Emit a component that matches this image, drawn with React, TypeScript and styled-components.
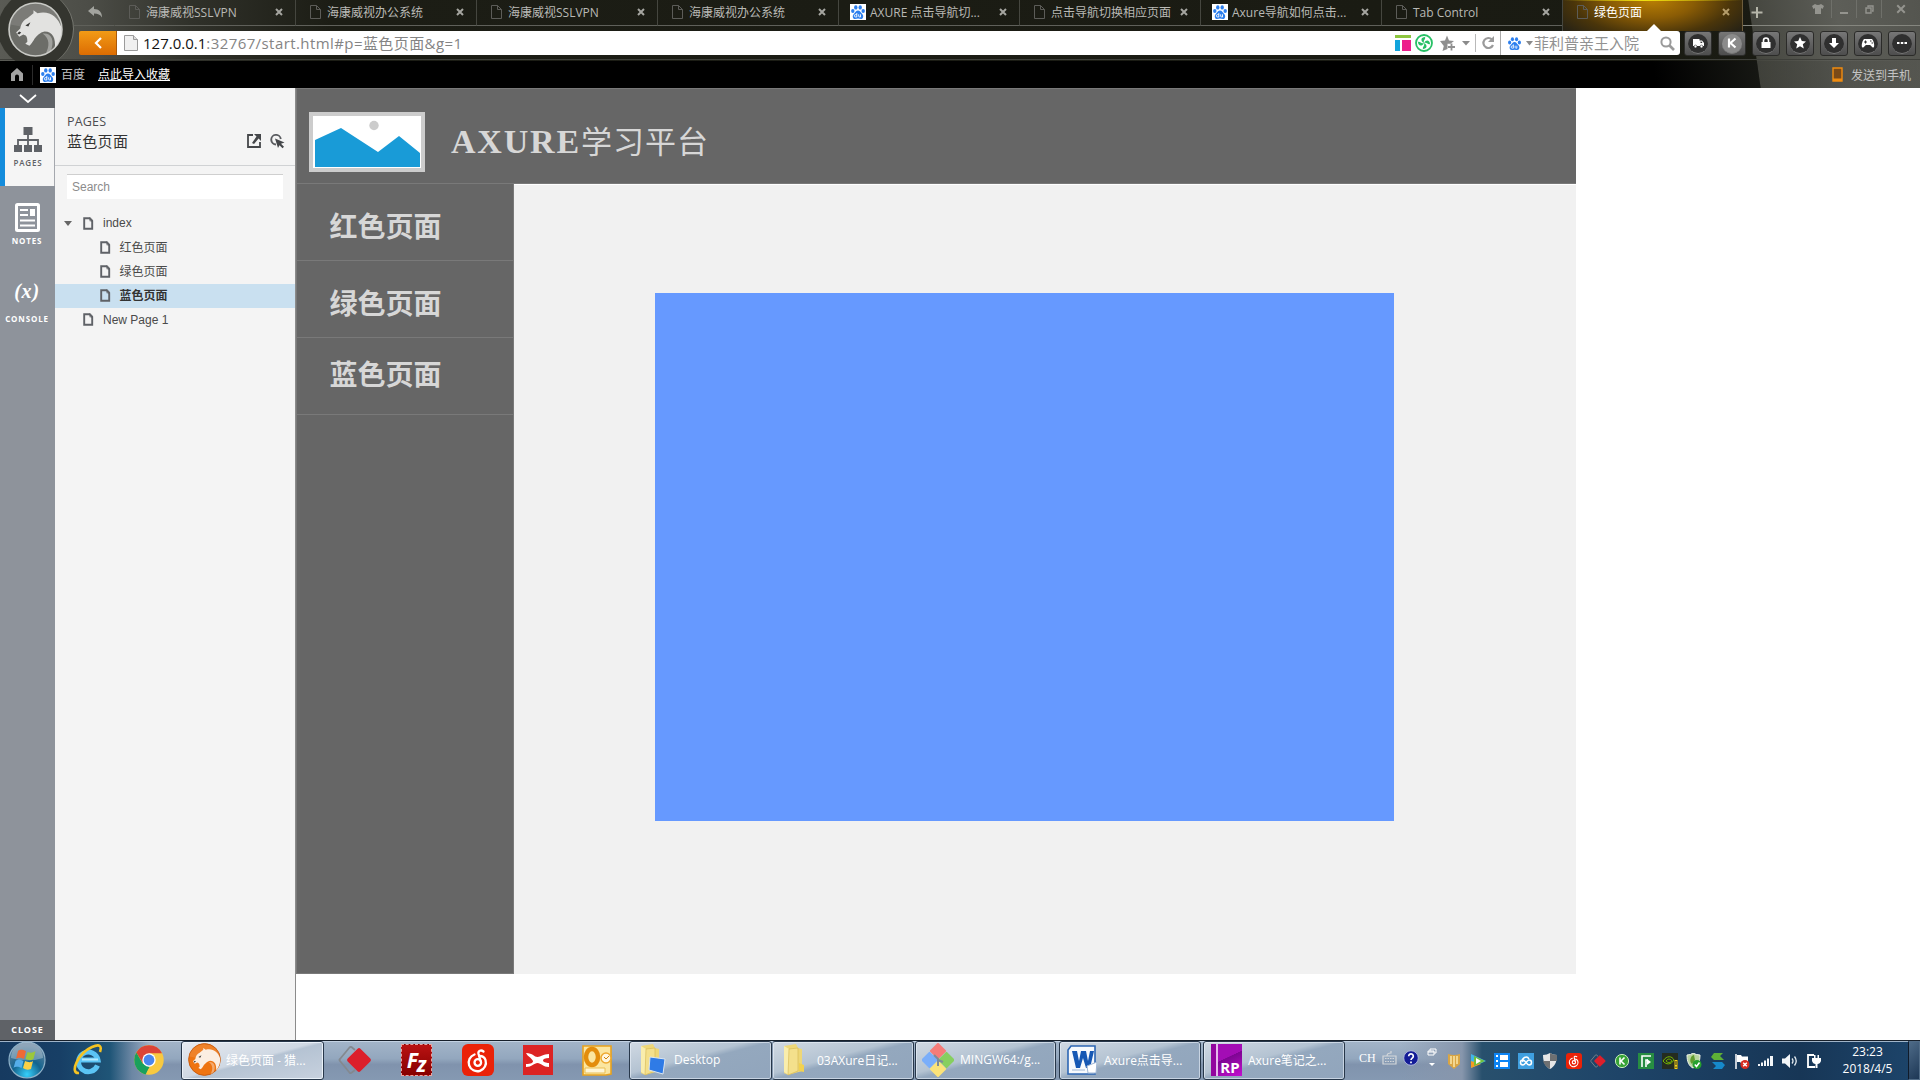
import React from "react";
import styled, { createGlobalStyle, css } from "styled-components";

const ui = `"Open Sans", "Noto Sans CJK SC", sans-serif`;
const arial = `"Liberation Sans", "Noto Sans CJK SC", sans-serif`;

const Global = createGlobalStyle`
  *, *::before, *::after { box-sizing: border-box; }
  body { margin: 0; background: #fff; overflow: hidden; font-family: ${ui}; }
  svg { display: block; flex: none; }
`;

const Desktop = styled.div`
  width: 1920px;
  height: 1080px;
  display: flex;
  flex-direction: column;
  overflow: hidden;
  background: #fff;
`;

/* ---------- browser chrome ---------- */

const Chrome = styled.header`
  position: relative;
  height: 88px;
  flex: none;
  display: flex;
  flex-direction: column;
  background: linear-gradient(82deg, transparent 0 1743px, #45463f 1744px, #5d5e58 1830px, #54554f 100%),
    linear-gradient(90deg, #5a5b55 0, #4c4d47 90px, #30312a 190px, #1c1d15 330px, #191a12 100%);
`;

const Brand = styled.div`
  position: absolute;
  left: -2px;
  top: -9px;
  width: 76px;
  height: 76px;
  border-radius: 50%;
  display: grid;
  place-items: center;
  background: #34352f;
  border-right: 1px solid #777871;
  clip-path: inset(9px 0 6px 2px);
`;

const TabRow = styled.div`
  height: 26px;
  display: flex;
  padding-left: 74px;
`;

const BackSlot = styled.div`
  width: 40px;
  padding: 6px 0 0 14px;
  border-bottom: 1px solid #5f605a;
`;

const Tab = styled.div<{ $active?: boolean }>`
  width: 181px;
  height: 26px;
  flex: none;
  display: flex;
  align-items: center;
  padding: 0 12px 1px 11px;
  border-left: 1px solid #45463f;
  border-bottom: 1px solid #5f605a;
  font-size: 12px;
  line-height: 22px;
  color: #b9b9b5;
  ${(p) =>
    p.$active &&
    css`
      color: #fff;
      height: 31px;
      padding-bottom: 7px;
      border-bottom: 0;
      border-right: 1px solid #6d5c3c;
      background: linear-gradient(90deg, transparent 0, #efe010 45%, transparent 100%) 0 0 / 100% 1px no-repeat,
        radial-gradient(ellipse 110px 48px at 50% 0, #b97f04 0, #8a5c05 38%, #4a350a 72%, transparent 100%), #282315;
    `}
`;

const Favicon = styled.span<{ $wide?: boolean }>`
  width: 20px;
  flex: none;
  display: flex;
  padding-left: ${(p) => (p.$wide ? 0 : 3)}px;
`;

const TabTitle = styled.span`
  flex: 1;
  white-space: nowrap;
  margin-top: 1px;
`;

const NewTab = styled.div`
  flex: 1;
  display: flex;
  align-items: flex-start;
  padding: 7px 0 0 8px;
  border-bottom: 1px solid #85867f;
`;

const WindowControls = styled.div`
  margin: -7px 0 0 auto;
  display: flex;
`;

const WindowButton = styled.div<{ $w: number }>`
  width: ${(p) => p.$w}px;
  height: 18px;
  display: grid;
  place-items: center;
  border-right: 1px solid #6f706a;
  &:last-child {
    border-right: 0;
  }
`;

const AddressRow = styled.div`
  height: 34px;
  display: flex;
  padding: 5px 4px 5px 79px;
  border-bottom: 1px solid #3e3f3a;
`;

const GoBack = styled.div`
  width: 38px;
  height: 24px;
  display: grid;
  place-items: center;
  border-radius: 2px 0 0 2px;
  background: linear-gradient(#f29b16, #dc6c02);
  border-right: 1px solid #a9590a;
`;

const UrlField = styled.div`
  width: 1384px;
  height: 24px;
  display: flex;
  align-items: center;
  padding-left: 7px;
  background: #fff;
  border-right: 1px solid #aaa;
`;

const UrlText = styled.span`
  margin-left: 5px;
  flex: 1;
  font-size: 15px;
  line-height: 24px;
  letter-spacing: 0.42px;
  color: #848484;
  b {
    font-weight: 400;
    letter-spacing: 0;
    color: #111;
  }
`;

const UrlTools = styled.div`
  display: flex;
  align-items: center;
  padding-right: 2px;
`;

const SearchField = styled.div`
  width: 179px;
  height: 24px;
  display: flex;
  align-items: center;
  padding: 0 5px 0 6px;
  border-radius: 0 3px 3px 0;
  background: #fff;
  color: #929292;
  font-size: 15px;
  line-height: 24px;
  span {
    flex: 1;
    margin-left: 1px;
  }
`;

const ToolButtons = styled.div`
  display: flex;
  gap: 6px;
  margin-left: 4px;
`;

const ToolButton = styled.div`
  width: 28px;
  height: 25px;
  display: grid;
  place-items: center;
  border: 1px solid #2b2b29;
  border-radius: 3px;
  background: linear-gradient(#777, #4d4d4d);
`;

const ToolDisc = styled.div<{ $light?: boolean }>`
  width: 20px;
  height: 20px;
  display: grid;
  place-items: center;
  border-radius: 50%;
  background: ${(p) => (p.$light ? "#8b8b8b" : "#2f2f2f")};
  border-bottom: 1px solid #777;
`;

const BookmarkRow = styled.div`
  flex: 1;
  display: flex;
  align-items: center;
  margin-top: 1px;
  padding: 0 9px 0 11px;
  font-size: 12px;
  color: #c4c4c4;
  background: linear-gradient(
    82deg,
    #000 0 1640px,
    #161713 1743px,
    rgba(60, 61, 55, 0.6) 1744px,
    rgba(85, 86, 80, 0.5) 100%
  );
`;

const BookmarkDivider = styled.div`
  width: 1px;
  height: 20px;
  margin: 0 7px 0 9px;
  background: #2c2c2c;
`;

const Bookmark = styled.span<{ $link?: boolean }>`
  margin-left: ${(p) => (p.$link ? 13 : 5)}px;
  line-height: 20px;
  ${(p) => p.$link && "color: #fff; text-decoration: underline;"}
`;

const SendToPhone = styled.div`
  margin-left: auto;
  display: flex;
  gap: 8px;
  align-items: center;
`;

/* ---------- prototype player ---------- */

const Player = styled.main`
  height: 952px;
  display: flex;
`;

const Rail = styled.nav`
  width: 55px;
  display: flex;
  flex-direction: column;
  background: #8e939b;
`;

const RailCap = styled.div<{ $bottom?: boolean }>`
  height: 20px;
  display: grid;
  place-items: center;
  background: #5f6267;
  color: #fff;
  font: 700 9px/20px "Open Sans", sans-serif;
  letter-spacing: 0.9px;
  margin-top: ${(p) => (p.$bottom ? "auto" : 0)};
`;

const RailItem = styled.div<{ $active?: boolean }>`
  height: 78px;
  display: flex;
  flex-direction: column;
  align-items: center;
  padding: 17px 1px 0 0;
  font: ${(p) => (p.$active ? 600 : 700)} 8px/12px "Open Sans", sans-serif;
  letter-spacing: 0.85px;
  color: ${(p) => (p.$active ? "#5f6267" : "#fff")};
  ${(p) =>
    p.$active &&
    css`
      background: #f5f5f5;
      border-left: 5px solid #148cdc;
      border-right: 1px solid #a5a8ae;
      padding-right: 3px;
    `}
`;

const RailGlyph = styled.div`
  height: 29px;
  margin-bottom: 3px;
  display: grid;
  place-items: center;
`;

const ConsoleGlyph = styled(RailGlyph)`
  font: italic 700 20px/21px "Liberation Serif", serif;
  align-items: start;
  letter-spacing: 0.8px;
`;

const Panel = styled.aside`
  width: 240px;
  background: #f4f4f4;
`;

const PanelHead = styled.div`
  height: 78px;
  padding: 25px 10px 0 12px;
  border-bottom: 1px solid #d0d2d4;
`;

const PanelLabel = styled.div`
  font: 12.5px/17px "Open Sans", sans-serif;
  letter-spacing: 0.2px;
  color: #4c4d50;
`;

const PanelTitle = styled.div`
  display: flex;
  align-items: center;
  gap: 9px;
  height: 22px;
  font: 15px/22px ${arial};
  letter-spacing: 0.3px;
  color: #333;
  span {
    flex: 1;
    padding-top: 1px;
  }
`;

const SearchBox = styled.div`
  margin: 8px 12px 12px;
  height: 25px;
  padding-left: 5px;
  border-top: 1px solid #cfcfcf;
  background: #fff;
  font: 12px/24px ${arial};
  color: #8c8c8c;
`;

const TreeRow = styled.div<{ $level: number; $selected?: boolean }>`
  height: 24.2px;
  display: flex;
  align-items: center;
  padding-left: ${(p) => 9 + p.$level * 16.5}px;
  font: ${(p) => (p.$selected ? 700 : 400)} 12px/24px ${arial};
  color: ${(p) => (p.$selected ? "#333" : "#4a4a4a")};
  background: ${(p) => (p.$selected ? "#c9e0f0" : "transparent")};
`;

const Arrow = styled.span<{ $open?: boolean }>`
  width: 19px;
  &::before {
    content: "";
    display: block;
    width: 0;
    border: 4.5px solid transparent;
    border-top: 5px solid ${(p) => (p.$open ? "#666" : "transparent")};
    border-bottom: 0;
  }
`;

const TreeText = styled.span<{ $child?: boolean }>`
  margin-left: 9px;
  padding-top: ${(p) => (p.$child ? 1 : 0)}px;
`;

const Stage = styled.section`
  flex: 1;
  border-left: 1px solid #8b8b8b;
  background: #fff;
`;

const Prototype = styled.div`
  width: 1280px;
  height: 886px;
  display: flex;
  flex-direction: column;
`;

const Banner = styled.div`
  height: 96px;
  display: flex;
  align-items: center;
  padding-left: 13px;
  background: #666;
  border-top: 1px solid #797979;
  border-bottom: 1px solid #797979;
  border-left: 1px solid #797979;
`;

const Picture = styled.div`
  width: 116px;
  height: 60px;
  margin: 12px 26px 0 -1px;
  border: 4px solid #ccc;
  background: #fff;
`;

const BannerTitle = styled.h1`
  margin: 10px 0 0;
  display: flex;
  align-items: baseline;
  color: #d7d7d7;
  font: 400 31px/44px "Noto Sans CJK SC", sans-serif;
  letter-spacing: 1px;
  span {
    font: 700 34px/44px "Liberation Serif", serif;
    letter-spacing: 1.8px;
  }
`;

const Columns = styled.div`
  flex: 1;
  display: flex;
`;

const Menu = styled.div`
  width: 218px;
  background: #666;
  border: 1px solid #797979;
  border-top: 0;
`;

const MenuItem = styled.div<{ $top: number }>`
  height: 77px;
  padding: ${(p) => p.$top}px 0 0 32.5px;
  border-bottom: 1px solid #797979;
  font: 700 28px/40px "Noto Sans CJK SC", sans-serif;
  color: #d7d7d7;
`;

const Frame = styled.div`
  flex: 1;
  padding: 108px 182px 153px 141px;
  background: #f1f1f1;
  border-top: 1px solid #fff;
`;

const BluePage = styled.div`
  height: 528px;
  background: #69f;
`;

/* ---------- taskbar ---------- */

const Taskbar = styled.footer`
  height: 40px;
  display: flex;
  border-top: 1px solid #17202b;
  box-shadow: inset 0 1px 0 rgba(205, 220, 235, 0.75);
  background: linear-gradient(90deg, #163a60 0, #173f66 60px, #1f5577 110px, #6c87a4 132px, transparent 150px),
    linear-gradient(90deg, transparent 1400px, #8796ac 1462px, #28506d 1482px, #1e4468 1620px, #173656 1800px, #1d456b 1920px),
    linear-gradient(#a3b5c9 0, #93a7be 45%, #8093ad 60%, #8599b2 100%);
`;

const Launcher = styled.div<{ $w: number }>`
  width: ${(p) => p.$w}px;
  flex: none;
  display: grid;
  place-items: center;
  padding-bottom: 1px;
`;

const Task = styled.div<{ $w: number; $ml?: number; $active?: boolean; $joined?: boolean }>`
  width: ${(p) => p.$w}px;
  margin-left: ${(p) => p.$ml ?? 0}px;
  flex: none;
  height: 39px;
  display: flex;
  align-items: center;
  gap: 5px;
  padding: 0 0 2px 5px;
  border: 1px solid #27374a;
  border-left-color: ${(p) => (p.$joined ? "#8396ad" : "#27374a")};
  border-radius: 3px;
  box-shadow: inset 0 0 0 1px rgba(235, 242, 250, ${(p) => (p.$active ? 0.95 : 0.6)});
  background: ${(p) =>
    p.$active
      ? "linear-gradient(165deg, #e6eaf0 0, #cfd8e3 48%, #b5c3d3 52%, #c7d1de 100%)"
      : "linear-gradient(165deg, #d0d9e3 0, #b4c3d2 42%, #94a8be 50%, #91a5bc 100%)"};
  font-size: 12px;
  color: #fff;
  white-space: nowrap;
`;

const TaskIcon = styled.span`
  width: 34px;
  display: grid;
  place-items: center;
`;

const LanguageBar = styled.div`
  width: 101px;
  flex: none;
  display: flex;
  align-items: center;
  padding-left: 14px;
  gap: 6px;
  margin-top: -5px;
  color: #fff;
  font: 12px/14px "Liberation Serif", serif;
`;

const Tray = styled.div`
  width: 376px;
  flex: none;
  display: flex;
  align-items: center;
  gap: 8px;
`;

const Clock = styled.div`
  width: 86px;
  flex: none;
  padding: 2px 0 0 5px;
  text-align: center;
  font-size: 12px;
  line-height: 17px;
  color: #fff;
`;

const ShowDesktop = styled.div`
  margin-left: auto;
  width: 12px;
  flex: none;
  border: 1px solid #506b86;
  border-left-color: #101b2a;
  background: linear-gradient(135deg, #4e6b88, #1d3755);
`;

/* ---------- drawings ---------- */

type IconProps = { w?: number; h?: number; box?: string; children: React.ReactNode };
const Icon = ({ w = 16, h = w, box, children }: IconProps) => (
  <svg width={w} height={h} viewBox={box ?? `0 0 ${w} ${h}`} fill="none">
    {children}
  </svg>
);

const TabDoc = () => (
  <Icon w={11} h={14}>
    <path d="M.5.5h6l4 4v9H.5zM6.500.5v4h4" stroke="#5c5c58" />
  </Icon>
);

const Paw = ({ s = 16, tile = true }: { s?: number; tile?: boolean }) => (
  <Icon w={s} h={s} box="0 0 16 16">
    {tile && <path d="M0 0h16v16H0z" fill="#fff" />}
    <g fill="#2c7fee">
      <ellipse cx="2.800" cy="7" rx="1.700" ry="2.100" />
      <ellipse cx="5.800" cy="3.400" rx="1.700" ry="2.200" />
      <ellipse cx="10.200" cy="3.400" rx="1.700" ry="2.200" />
      <ellipse cx="13.200" cy="7" rx="1.700" ry="2.100" />
      <path d="M8 6.500c2 0 2.400 1.800 4 3.200 2 1.700 1.500 5.300-1 5.300-1.200 0-2-.4-3-.4s-1.800.4-3 .4c-2.500 0-3-3.600-1-5.300C5.600 8.300 6 6.500 8 6.500z" />
    </g>
    <path d="M6.800 9v4H5.600a1.100 1.100 0 010-2.400h1.200M8.700 10.300v2q0 .8 1.800.7v-2.700" stroke="#fff" strokeWidth=".9" />
  </Icon>
);

const Cross = ({ s = 8, c = "#a5a5a0", t = 2 }: { s?: number; c?: string; t?: number }) => (
  <Icon w={s} h={s} box="0 0 8 8">
    <path d="M1 1l6 6M7 1L1 7" stroke={c} strokeWidth={t} />
  </Icon>
);

const Caret = () => (
  <Icon w={8} h={5}>
    <path d="M0 0h8L4 4.500z" fill="#8a8a8a" />
  </Icon>
);

const Cheetah = ({ s, base, edge, fur }: { s: number; base: string; edge: string; fur: string }) => (
  <Icon w={s} h={s} box="0 0 54 54">
    <circle cx="27" cy="27" r="26" fill={base} stroke={edge} strokeWidth="1.600" />
    <path d="M2 22A26 26 0 0152 20L30 27z" fill="#fff" opacity=".1" />
    <path d="M34 31c9-1 12 7 8 17l-5 3c4-8 4-15-3-20z" fill={fur} opacity=".45" />
    <path
      d="M8 30l4-4c1-5 3-8 7-10l6-5V8l4 3c11-3 20 3 23.500 14C53 35 50 40 46 45c1-9-2-16-10-16-5 1-7 4-10 7-1 2-3 5-5 7l-4-2 2-2c0-5-1-6-4-7l-4 2z"
      fill={fur}
    />
    <path d="M17 23l5-3-2 4zM9 31l2-2 2 1-2 2z" fill="#3a3a38" />
  </Icon>
);

const PageDoc = () => (
  <Icon w={11} h={13}>
    <path d="M1.200 1.200h5.300L9.200 4v7.800h-8z" stroke="#5f6267" strokeWidth="1.900" />
    <path d="M6 0h1.500L10 3v2H8L6 4z" fill="#5f6267" opacity=".4" />
  </Icon>
);

const NetEase = ({ s }: { s: number }) => (
  <Icon w={s} h={s} box="0 0 32 32">
    <rect width="32" height="32" rx="6" fill="#ea2208" />
    <g stroke="#fff" strokeWidth="2.300" strokeLinecap="round">
      <path d="M21.500 7.500c-2.500-2-5.700-.7-5 2.300l2 7" />
      <circle cx="15.800" cy="18.500" r="3.300" />
      <path d="M12.500 10.500a8.600 8.600 0 1011 5.500c-.8-2.500-3-4-6-4" />
    </g>
  </Icon>
);

const Diamond = ({ s }: { s: number }) => (
  <Icon w={s} h={s} box="0 0 34 34">
    <path d="M17 7L13.500 4Q12.500 3.500 11.500 4.500L2 16q-1 1 0 2l9.500 11.500q1 1 2 .3L17 27" stroke="#84898f" strokeWidth="1.800" />
    <rect x="12" y="8" width="18" height="18" rx="2" transform="rotate(45 21 17)" fill="#dc1f2b" />
  </Icon>
);

const Folder = ({ screen }: { screen?: boolean }) => (
  <Icon w={28} h={34}>
    <path d="M3 3l12-2 2 4 4 1v22L7 32 3 30z" fill="#eed777" />
    <path d="M3 3l5 3v26l-5-3z" fill="#f9edac" />
    <path d="M8 6l9-1v23l-10 4z" fill="#f4e08c" stroke="#d4b651" strokeWidth=".6" />
    {screen ? (
      <path d="M12 14l15 2-2 15-14-4z" fill="#2f7be6" stroke="#dce6ef" />
    ) : (
      <path d="M18 20l5 2v7l-5-1z" fill="#f2d250" />
    )}
  </Icon>
);

const WindowsOrb = () => (
  <Icon w={38} h={38}>
    <defs>
      <radialGradient id="orb" cx="50%" cy="90%" r="80%">
        <stop offset="0" stopColor="#35d0fb" />
        <stop offset=".5" stopColor="#14648f" />
        <stop offset="1" stopColor="#5d7f9b" />
      </radialGradient>
    </defs>
    <circle cx="19" cy="19" r="18" fill="url(#orb)" stroke="#8fb2c9" strokeWidth="1.200" />
    <path d="M3 17A16 16 0 0135 17Q19 22 3 17z" fill="#fff" opacity=".3" />
    <path d="M10 10c3-2 5-1 8 0l-2 8c-3-1-5-2-8 0z" fill="#ee6a35" />
    <path d="M19.500 11c3 1 5 1 8-1l-2 8c-3 2-5 1-8 0z" fill="#9bc83c" />
    <path d="M7.500 20c3-2 5-1 8 0l-2 7c-3-1-5-2-8 0z" fill="#55aee9" />
    <path d="M17 20c3 1 5 2 8 0l-2 8c-3 1-5 1-8-1z" fill="#fbd046" />
  </Icon>
);

const Explorer = () => (
  <Icon w={32} h={32}>
    <path d="M25.500 21.500a9.800 9.800 0 11.500-5.500H9" stroke="#5bc4f5" strokeWidth="5" />
    <path d="M26 15.500H10" stroke="#b6ebff" strokeWidth="2" />
    <path d="M7 29C-3 30 6 9 20 3c8-3.500 10-1 8 5" stroke="#f5c322" strokeWidth="2.600" />
  </Icon>
);

const ChromeLogo = () => (
  <Icon w={30} h={30}>
    <circle cx="15" cy="15" r="14.700" fill="#f8c940" />
    <path d="M2.300 7.600A14.700 14.700 0 0128 8.200H15L9 18.500z" fill="#dc4437" />
    <path d="M2.300 7.600L9 19l6 3-3.300 7.400A14.700 14.700 0 012.300 7.600z" fill="#1aa05c" />
    <path d="M9 18.500l6.500 3.500-4.500 7A14 14 0 013 23z" fill="#1aa05c" />
    <circle cx="15" cy="15" r="6.700" fill="#fff" />
    <circle cx="15" cy="15" r="5.400" fill="#4a86ee" />
  </Icon>
);

const IconLetters = styled.div<{ $bg: string; $size: number; $shift?: number }>`
  width: 31px;
  height: 32px;
  display: grid;
  place-items: center;
  padding-top: ${(p) => p.$shift ?? 0}px;
  padding-left: ${(p) => (p.$shift ? 8 : 0)}px;
  background: ${(p) => p.$bg};
  color: #fff;
  font: 700 ${(p) => p.$size}px/14px "Open Sans", sans-serif;
`;

const Zilla = styled(IconLetters)`
  border: 1px dashed #e8a4a0;
  font-style: italic;
  letter-spacing: -1px;
  i {
    display: inline-block;
    transform: translateY(4px);
  }
`;

const tabs: { title: string; paw?: boolean; active?: boolean }[] = [
  { title: "海康威视SSLVPN" },
  { title: "海康威视办公系统" },
  { title: "海康威视SSLVPN" },
  { title: "海康威视办公系统" },
  { title: "AXURE 点击导航切...", paw: true },
  { title: "点击导航切换相应页面" },
  { title: "Axure导航如何点击...", paw: true },
  { title: "Tab Control" },
  { title: "绿色页面", active: true },
];

const toolGlyphs: React.ReactNode[] = [
  <g>
    <path d="M2 3h6.500v7H2zM8.500 4.500H11L13 7v3H8.500z" fill="#fff" />
    <path d="M9.500 5.500h1L11.500 7h-2z" fill="#333" />
    <circle cx="4.500" cy="10.500" r="1.400" fill="#fff" stroke="#333" strokeWidth=".6" />
    <circle cx="10.500" cy="10.500" r="1.400" fill="#fff" stroke="#333" strokeWidth=".6" />
  </g>,
  <path d="M4 2.500v9M10.500 2.500L5.500 7l5 4.500" stroke="#fff" strokeWidth="2.200" />,
  <g>
    <path d="M2.500 6h9v6h-9z" fill="#fff" />
    <path d="M4.500 7V4.500a2.500 2.500 0 015 0V7" stroke="#fff" strokeWidth="1.600" />
  </g>,
  <path d="M7 1l1.800 4 4.200.4-3.200 2.800 1 4.300L7 10.200 3.200 12.500l1-4.300L1 5.400 5.200 5z" fill="#fff" />,
  <path d="M5 2h4v5h3l-5 5-5-5h3z" fill="#fff" />,
  <g>
    <path d="M3 3h8c2 2 3 8 1.500 8.500S10 9 9 9H5c-1 0-2 3-3.500 2.500S1 5 3 3z" fill="#fff" />
    <path d="M3 6h3M4.500 4.500v3M9 5h1.500M10.500 7H12" stroke="#333" />
  </g>,
  <path d="M2 6h2.500v2H2zM5.800 6h2.500v2H5.800zM9.500 6H12v2H9.500z" fill="#fff" />,
];

const BrowserChrome = () => (
  <Chrome>
    <TabRow>
      <BackSlot>
        <Icon w={15} h={12}>
          <path d="M0 5l6-5v3c5 0 8 3 8 8.500C12 8.500 10 7.500 6 7.500V10z" fill="#a2a39e" />
        </Icon>
      </BackSlot>
      {tabs.map((t, i) => (
        <Tab key={i} $active={t.active}>
          <Favicon $wide={t.paw}>{t.paw ? <Paw /> : <TabDoc />}</Favicon>
          <TabTitle>{t.title}</TabTitle>
          <Cross c={t.active ? "#b39c6b" : undefined} />
        </Tab>
      ))}
      <NewTab>
        <Icon w={12}>
          <path d="M6 0v11M.5 5.500h11" stroke="#b5b5a9" strokeWidth="2" />
        </Icon>
        <WindowControls>
          <WindowButton $w={27}>
            <Icon w={12} h={10}>
              <path d="M0 2l3-2q3 2 6 0l3 2-1.500 3L9 4v6H3V4l-1.500 1z" fill="#94948e" />
            </Icon>
          </WindowButton>
          <WindowButton $w={25}>
            <Icon w={8} h={9}>
              <path d="M0 8h8" stroke="#94948e" strokeWidth="2" />
            </Icon>
          </WindowButton>
          <WindowButton $w={25}>
            <Icon w={9}>
              <path d="M3 2V1h5v5H7M1 3h5v5H1z" stroke="#94948e" strokeWidth="1.400" />
            </Icon>
          </WindowButton>
          <WindowButton $w={38}>
            <Cross s={10} c="#94948e" t={1.6} />
          </WindowButton>
        </WindowControls>
      </NewTab>
    </TabRow>
    <AddressRow>
      <GoBack>
        <Icon w={8} h={12}>
          <path d="M7 1L2 6l5 5" stroke="#fff" strokeWidth="2.200" />
        </Icon>
      </GoBack>
      <UrlField>
        <Icon w={14} h={16}>
          <path d="M.5.5h9l4 4v11H.5z" fill="#f0f0f0" stroke="#9b9b9b" />
          <path d="M9.500.5v4h4" fill="#ddd" stroke="#9b9b9b" />
        </Icon>
        <UrlText>
          <b>127.0.0.1</b>:32767/start.html#p=蓝色页面&amp;g=1
        </UrlText>
        <UrlTools>
          <Icon>
            <path d="M0 0h16v3H0z" fill="#8dc63f" />
            <path d="M0 5h5v11H0z" fill="#12a4dc" />
            <path d="M7 5h9v11H7z" fill="#ed1e8b" />
          </Icon>
          <Icon w={26} h={20}>
            <circle cx="13" cy="10" r="8" stroke="#27c065" strokeWidth="1.800" />
            <path
              d="M13 10C9 8 10 4 14 4c1 2-2 3-1 6zM13 10c2-4 6-3 6 1-2 1-3-2-6-1zM13 10c4 2 3 6-1 6-1-2 2-3 1-6zM13 10c-2 4-6 3-6-1 2-1 3 2 6 1z"
              fill="#27c065"
            />
          </Icon>
          <Icon w={25} h={18}>
            <path d="M10 1.500l2 5 5 .4-3.500 2.800h-3V15L5.500 17l1.300-5L3 7l5-.5z" fill="#8f8f8f" />
            <path d="M14.500 9.500v7M11 13h7" stroke="#8f8f8f" strokeWidth="1.800" />
          </Icon>
          <Caret />
          <Icon w={28} h={18}>
            <path d="M5.500 0v18" stroke="#b9b9b9" />
            <path d="M22 5.500A5 5 0 1023 11" stroke="#9a9a9a" strokeWidth="2.200" />
            <path d="M24 2v6h-6z" fill="#9a9a9a" />
          </Icon>
        </UrlTools>
      </UrlField>
      <SearchField>
        <Paw s={15} tile={false} />
        <Icon w={11} h={5}>
          <path d="M4 0h7L7.500 4.500z" fill="#8a8a8a" />
        </Icon>
        <span>菲利普亲王入院</span>
        <Icon w={15}>
          <circle cx="6" cy="6" r="4.600" stroke="#9a9a9a" strokeWidth="2" />
          <path d="M9.500 9.500l4.500 4.500" stroke="#9a9a9a" strokeWidth="2.600" />
        </Icon>
      </SearchField>
      <ToolButtons>
        {toolGlyphs.map((g, i) => (
          <ToolButton key={i}>
            <ToolDisc $light={i === 1}>
              <Icon w={14}>{g}</Icon>
            </ToolDisc>
          </ToolButton>
        ))}
      </ToolButtons>
    </AddressRow>
    <BookmarkRow>
      <Icon w={12} h={13}>
        <path d="M6 0l6 5.500V13H8V8.500a2 2 0 00-4 0V13H0V5.500z" fill="#a3a3a3" />
      </Icon>
      <BookmarkDivider />
      <Paw />
      <Bookmark>百度</Bookmark>
      <Bookmark $link>点此导入收藏</Bookmark>
      <SendToPhone>
        <Icon w={11} h={15}>
          <path d="M1 1h9v13H1z" fill="#7b4a17" stroke="#f08c10" strokeWidth="1.400" />
          <path d="M1 11.500h9V14H1z" fill="#f08c10" />
        </Icon>
        发送到手机
      </SendToPhone>
    </BookmarkRow>
    <Brand>
      <Cheetah s={55} base="#6c6d68" edge="#c8c9c5" fur="#e2e2e0" />
    </Brand>
    <TabPointer />
  </Chrome>
);

const TabPointer = styled.i`
  position: absolute;
  left: 1647px;
  top: 24px;
  border: 7px solid transparent;
  border-top: 0;
  border-bottom-color: #fff;
`;

const pages = [
  { name: "index", level: 0, open: true },
  { name: "红色页面", level: 1 },
  { name: "绿色页面", level: 1 },
  { name: "蓝色页面", level: 1, selected: true },
  { name: "New Page 1", level: 0 },
];

const PlayerView = () => (
  <Player>
    <Rail>
      <RailCap>
        <Icon w={18} h={9}>
          <path d="M1 1l8 7 8-7" stroke="#fff" strokeWidth="1.800" />
        </Icon>
      </RailCap>
      <RailItem $active>
        <RailGlyph>
          <Icon w={28} h={25}>
            <path
              d="M9.500 0h9v8h-9zM0 18h8v7H0zM10 18h8v7h-8zM20 18h8v7h-8z"
              fill="#5f6267"
            />
            <path d="M14 8v10M4 18v-5h20v5" stroke="#5f6267" strokeWidth="1.800" />
          </Icon>
        </RailGlyph>
        PAGES
      </RailItem>
      <RailItem>
        <RailGlyph>
          <Icon w={25} h={29}>
            <rect x="1.500" y="1.500" width="22" height="26" rx="1" stroke="#fff" strokeWidth="3" />
            <path d="M5 7h8M5 12h8M5 17.500h15M5 22.500h15" stroke="#fff" strokeWidth="2" />
            <path d="M15 6h5v7h-5z" fill="#fff" />
          </Icon>
        </RailGlyph>
        NOTES
      </RailItem>
      <RailItem>
        <ConsoleGlyph>(x)</ConsoleGlyph>
        CONSOLE
      </RailItem>
      <RailCap $bottom>CLOSE</RailCap>
    </Rail>
    <Panel>
      <PanelHead>
        <PanelLabel>PAGES</PanelLabel>
        <PanelTitle>
          <span>蓝色页面</span>
          <Icon w={14}>
            <path d="M6 1H1v12h12V8" stroke="#45474a" strokeWidth="1.800" />
            <path d="M14 0v7l-2.400-2.400L7 10 5 9l4.500-6.500L7 0z" fill="#45474a" />
          </Icon>
          <Icon w={15} h={15}>
            <path d="M6 10.500A4.800 4.800 0 1110.800 5" stroke="#5a5c60" strokeWidth="1.900" />
            <path d="M5 4.500l9.500 4-3.500 1.300 3 3-1.500 1.500-3-3L8 14z" fill="#45474a" />
          </Icon>
        </PanelTitle>
      </PanelHead>
      <SearchBox>Search</SearchBox>
      {pages.map((p) => (
        <TreeRow key={p.name} $level={p.level} $selected={p.selected}>
          <Arrow $open={p.open} />
          <PageDoc />
          <TreeText $child={p.level > 0}>{p.name}</TreeText>
        </TreeRow>
      ))}
    </Panel>
    <Stage>
      <Prototype>
        <Banner>
          <Picture>
            <Icon w={108} h={52}>
              <path d="M2 24l26-12 37 24 21-16 21 17v14H2z" fill="#199bd7" />
              <circle cx="61" cy="9.500" r="4.700" fill="#ccc" />
            </Icon>
          </Picture>
          <BannerTitle>
            <span>AXURE</span>学习平台
          </BannerTitle>
        </Banner>
        <Columns>
          <Menu>
            <MenuItem $top={21}>红色页面</MenuItem>
            <MenuItem $top={21}>绿色页面</MenuItem>
            <MenuItem $top={15}>蓝色页面</MenuItem>
          </Menu>
          <Frame>
            <BluePage />
          </Frame>
        </Columns>
      </Prototype>
    </Stage>
  </Player>
);

const trayIcons: React.ReactNode[] = [
  <g>
    <path d="M2 1q6 2 12 0v10l-6 5-6-5z" fill="#d9a544" />
    <path d="M5 3v8M8 3v11M11 3v8" stroke="#fff0b8" strokeWidth="1.300" />
  </g>,
  <g>
    <path d="M1 1l15 7L1 15z" fill="#41b5ea" />
    <path d="M1 8v7l10-4z" fill="#f59b25" />
    <path d="M4 3l11 5-11 5z" fill="#72bf3c" />
    <path d="M6 5l5 3-5 3z" fill="#fff" />
  </g>,
  <g>
    <path d="M0 0h16v16H0z" fill="#0c84f4" />
    <path d="M2 2h2v2H2zM2 7h2v2H2zM2 12h2v2H2zM6 2h8v5H6zM6 9h8v5H6z" fill="#fff" />
  </g>,
  <g>
    <path d="M0 0h16v16H0z" fill="#3f9fe0" />
    <path d="M5 9a3 3 0 016-3M5 7a2.500 2.500 0 100 5c2 0 4-5 6-5a2.500 2.500 0 110 5c-2 0-4-5-6-5" stroke="#fff" strokeWidth="1.500" />
  </g>,
  <g>
    <path d="M1 2q4 0 7-2 3 2 7 2c0 8-3 12-7 14C4 14 1 10 1 2z" fill="#e6e6e6" />
    <path d="M8 0q3 2 7 2v6H8zM8 8v8C4 14 2 11 1 8z" fill="#6e7072" />
  </g>,
  null,
  null,
  <g>
    <circle cx="8" cy="8" r="6.600" fill="#37a336" stroke="#c7ecbd" strokeWidth="1" />
    <path d="M6 4.500v7M10.500 4.500L7 8l3.500 3.500" stroke="#fff" strokeWidth="1.600" />
  </g>,
  <g>
    <path d="M0 0h16v16H0z" fill="#278d42" />
    <path d="M4 14V3h9M8 14V7h2" stroke="#fff" strokeWidth="1.600" />
    <path d="M9 6l4 3-4 3z" fill="#fff" />
  </g>,
  <g>
    <path d="M0 0h16v16H0z" fill="#242c20" />
    <path d="M1 8c4-6 9-5 11-1-3 5-8 5-11 1zM4 8c2-3 5-2 6 0-2 2-4 2-6 0z" stroke="#76b900" />
    <path d="M12.500 7h3v9h-3z" fill="#f4d21b" />
    <path d="M14 8v4M14 13.500V15" stroke="#222" />
  </g>,
  <g>
    <path d="M1 2q4 0 6-2 3 2 7 2c0 7-2 10-7 13C3 13 1 9 1 2z" fill="#b8d59f" stroke="#f0f4ea" />
    <path d="M8 2C4 3 3 9 6 11l3-4z" fill="#5f9c2e" />
    <circle cx="11" cy="11.500" r="4.500" fill="#26a12e" />
    <path d="M8.800 11.500l1.700 2 3-4" stroke="#fff" strokeWidth="1.500" />
  </g>,
  <g>
    <path d="M1 4l3-4h9l-3 3 4 4H4z" fill="#5eb036" />
    <path d="M15 12l-3 4H3l3-3-4-4h10z" fill="#1689cb" />
  </g>,
  <g>
    <path d="M2 1v15" stroke="#fff" strokeWidth="1.500" />
    <path d="M3 2h4l1 1.500h6V10H7L6 9H3z" fill="#fff" />
    <circle cx="11" cy="11.500" r="4.500" fill="#d62b20" />
    <path d="M9.200 9.700l3.600 3.600M12.800 9.700l-3.600 3.600" stroke="#fff" strokeWidth="1.400" />
  </g>,
  <path d="M0 11h2v2H0zM3 9.500h2V13H3zM6 7.500h2V13H6zM9 5.500h2V13H9zM12 3h3v10h-3z" fill="#f3f6f8" />,
  <g>
    <path d="M0 5.500h3L8 1v14l-5-4.500H0z" fill="#f3f6f8" />
    <path d="M10 5.500q2 2.500 0 5M12.500 3.500q3.500 4.500 0 9" stroke="#e4ebf0" strokeWidth="1.300" />
  </g>,
  <g>
    <path d="M7 2H2v12h7" stroke="#fff" strokeWidth="1.800" />
    <path d="M5 1h3v2H5zM6 5h9v3q-1 3-3.500 3v4h-2v-4Q7 11 6 8zM8 2h1.500v4H8zM11.500 2H13v4h-1.500z" fill="#fff" />
  </g>,
];

const TaskbarView = () => (
  <Taskbar>
    <Launcher $w={54}>
      <WindowsOrb />
    </Launcher>
    <Launcher $w={68}>
      <Explorer />
    </Launcher>
    <Launcher $w={54}>
      <ChromeLogo />
    </Launcher>
    <Task $w={143} $ml={5} $active>
      <TaskIcon>
        <Cheetah s={33} base="#ee7411" edge="#c95d10" fur="#fbeee2" />
      </TaskIcon>
      绿色页面 - 猎...
    </Task>
    <Launcher $w={62}>
      <Diamond s={34} />
    </Launcher>
    <Launcher $w={60}>
      <Zilla $bg="linear-gradient(#b91212, #860000)" $size={21}>
        <span>
          F<i>z</i>
        </span>
      </Zilla>
    </Launcher>
    <Launcher $w={64}>
      <NetEase s={32} />
    </Launcher>
    <Launcher $w={55}>
      <Icon w={30}>
        <path d="M0 0h30v30H0z" fill="#dc2424" />
        <path d="M3 8c7 0 8 4 11.500 4S20 9 26 9v4c-4 0-6 1-6 2.500S23 18 26 18v4c-6 0-8-4-11.500-4S9 22 3 22v-3c5 0 7-1 7-3-2-4-5-4-7-8z" fill="#fff" />
      </Icon>
    </Launcher>
    <Launcher $w={64}>
      <Icon w={32}>
        <path d="M2 2h28v28l-5 1H2z" fill="#fbe6a0" stroke="#e9a21c" strokeWidth="1.600" />
        <ellipse cx="11" cy="13" rx="6" ry="8" stroke="#e38d0c" strokeWidth="4.500" />
        <circle cx="25" cy="14" r="5" fill="#fff6df" stroke="#eeaa30" strokeWidth="1.500" />
        <path d="M23 13l2 2 3-3" stroke="#d0860d" />
        <path d="M4 24h20v5H4z" fill="#fff6d5" stroke="#eabf55" />
      </Icon>
    </Launcher>
    <Task $w={143}>
      <TaskIcon>
        <Folder screen />
      </TaskIcon>
      Desktop
    </Task>
    <Task $w={142} $joined>
      <TaskIcon>
        <Folder />
      </TaskIcon>
      03AXure日记...
    </Task>
    <Task $w={141} $ml={1}>
      <TaskIcon>
        <Icon w={32} h={34}>
          <rect x="10" y="2" width="12" height="12" rx="1" transform="rotate(45 16 8)" fill="#f57c79" />
          <rect x="1.500" y="11" width="12" height="12" rx="1" transform="rotate(45 7.500 17)" fill="#7aaefa" />
          <rect x="18.500" y="11" width="12" height="12" rx="1" transform="rotate(45 24.500 17)" fill="#86cf5f" />
          <rect x="10" y="20" width="12" height="12" rx="1" transform="rotate(45 16 26)" fill="#fbe37a" />
          <path d="M12 12l4 4v7M16 17l5 2" stroke="#7d8b9b" strokeWidth="2" />
        </Icon>
      </TaskIcon>
      MINGW64:/g...
    </Task>
    <Task $w={142} $ml={3}>
      <TaskIcon>
        <Icon w={30}>
          <path d="M4 1h24v28H1V5z" fill="#f7fafd" stroke="#2c66b3" strokeWidth="1.600" />
          <path d="M5 6h5l2 10 2-10h5l2 10 2-10h4l-4 17h-4l-3-10-3 10H9z" fill="#1658b4" />
          <path d="M5 25h13M20 21l10-4-1 11H21z" stroke="#9fb6d4" fill="#fff" />
        </Icon>
      </TaskIcon>
      Axure点击导...
    </Task>
    <Task $w={142} $ml={2}>
      <TaskIcon>
        <IconLetters
          $bg="linear-gradient(90deg, #92059e 0 5px, #e6b9ec 5px 7px, transparent 7px), linear-gradient(155deg, #a30db5 45%, #7d0592 46%, #c30fd0)"
          $size={15}
          $shift={14}
        >
          RP
        </IconLetters>
      </TaskIcon>
      Axure笔记之...
    </Task>
    <LanguageBar>
      CH
      <Icon w={15} h={14}>
        <path d="M1 5h13v8H1zM5 5q0-3 4-3V0" stroke="#d4d7da" strokeWidth="1.200" />
        <path d="M3 7.500h9M3 10.500h9" stroke="#d4d7da" strokeDasharray="1.500 1" />
      </Icon>
      <Icon w={16}>
        <circle cx="8" cy="8" r="7.300" fill="#131c97" stroke="#aeb6dc" />
        <path d="M5.700 6.200a2.300 2.300 0 114 1.500C8.600 8.600 8 9 8 10M8 11.500v1.700" stroke="#fff" strokeWidth="1.700" />
      </Icon>
      <Icon w={16} h={20}>
        <path d="M5 3V1h6v4H9M3 3h6v4H3zM3 4h6" stroke="#fff" />
        <path d="M4 15h6l-3 3z" fill="#fff" />
      </Icon>
    </LanguageBar>
    <Tray>
      {trayIcons.map((g, i) =>
        i === 5 ? <NetEase key={i} s={16} /> : i === 6 ? <Diamond key={i} s={16} /> : <Icon key={i}>{g}</Icon>
      )}
    </Tray>
    <Clock>
      23:23
      <br />
      2018/4/5
    </Clock>
    <ShowDesktop />
  </Taskbar>
);

export default function App() {
  return (
    <>
      <Global />
      <Desktop>
        <BrowserChrome />
        <PlayerView />
        <TaskbarView />
      </Desktop>
    </>
  );
}
